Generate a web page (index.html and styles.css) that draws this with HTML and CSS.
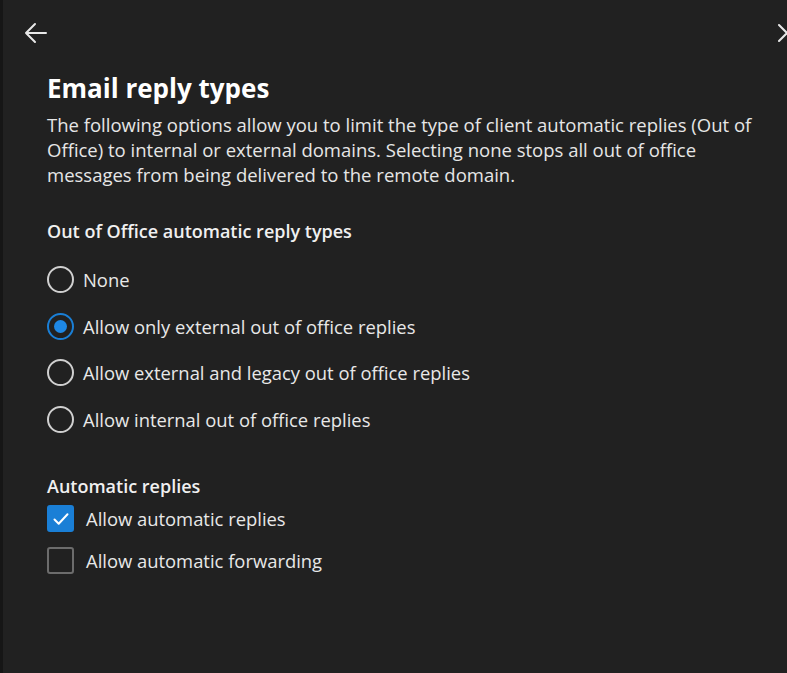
FILE: index.html
```html
<!DOCTYPE html>
<html lang="en">
<head>
<meta charset="utf-8">
<title>Email reply types</title>
<link rel="stylesheet" href="styles.css">
</head>
<body>
<div class="edge"></div>
<div class="panel">
  <div class="topbar">
    <button class="icon-btn back" aria-label="Back">
      <svg width="24" height="24" viewBox="0 0 24 24"><path d="M22 12H2M11 3L2 12l9 9" fill="none" stroke="#e8e8e8" stroke-width="2" stroke-linecap="round" stroke-linejoin="round"/></svg>
    </button>
    <button class="icon-btn close" aria-label="Close">
      <svg width="20" height="20" viewBox="0 0 20 20"><path d="M2 2l16 16M18 2L2 18" fill="none" stroke="#e8e8e8" stroke-width="2" stroke-linecap="round"/></svg>
    </button>
  </div>
  <div class="content">
    <h1 class="title">Email reply types</h1>
    <p class="desc">The following options allow you to limit the type of client automatic replies (Out of Office) to internal or external domains. Selecting none stops all out of office messages from being delivered to the remote domain.</p>

    <h2 class="section">Out of Office automatic reply types</h2>
    <div class="radios">
      <label class="radio"><span class="circle"></span><span class="label">None</span></label>
      <label class="radio checked"><span class="circle"></span><span class="label">Allow only external out of office replies</span></label>
      <label class="radio"><span class="circle"></span><span class="label">Allow external and legacy out of office replies</span></label>
      <label class="radio"><span class="circle"></span><span class="label">Allow internal out of office replies</span></label>
    </div>

    <h2 class="section section2">Automatic replies</h2>
    <div class="checks">
      <label class="check checked"><span class="box"><svg width="20" height="20" viewBox="0 0 20 20"><path d="M3.5 10.5l4.2 4.2 8.8-9.4" fill="none" stroke="#fff" stroke-width="2" stroke-linecap="round" stroke-linejoin="round"/></svg></span><span class="label">Allow automatic replies</span></label>
      <label class="check"><span class="box"></span><span class="label">Allow automatic forwarding</span></label>
    </div>
  </div>
</div>
</body>
</html>
```
FILE: styles.css
```css
html, body {
  margin: 0;
  padding: 0;
  height: 100%;
  background: #212121;
  overflow: hidden;
}
body {
  display: flex;
  font-family: "Open Sans", "Noto Sans", sans-serif;
  color: #f0f0f0;
}
.edge {
  width: 3px;
  background: #161616;
  flex: none;
}
.panel {
  flex: 1;
  position: relative;
}
.topbar {
  display: flex;
  justify-content: space-between;
  align-items: center;
  height: 66px;
  padding: 0 0 0 21px;
}
.icon-btn {
  background: none;
  border: 0;
  padding: 0;
  display: flex;
  cursor: pointer;
}
.close {
  margin-right: -10px;
}
.content {
  padding: 0 24px 0 44px;
}
.title {
  margin: 6px 0 0;
  font-size: 26px;
  font-weight: 700;
  line-height: 32px;
  color: #fff;
}
.desc {
  margin: 8px 0 0;
  font-size: 18.5px;
  line-height: 25px;
  color: #e6e6e6;
}
.section {
  margin: 32px 0 0;
  font-size: 18px;
  font-weight: 600;
  line-height: 24px;
  color: #f0f0f0;
}
.radios {
  display: flex;
  flex-direction: column;
  gap: 19.7px;
  margin-top: 23px;
}
.radio, .check {
  display: flex;
  align-items: center;
  font-size: 18.4px;
  color: #e8e8e8;
}
.circle {
  width: 23px;
  height: 23px;
  border: 2px solid #d0d0d0;
  border-radius: 50%;
  margin-right: 9px;
  flex: none;
  display: flex;
  align-items: center;
  justify-content: center;
}
.radio.checked .circle {
  border-color: #1a7fd6;
}
.radio.checked .circle::after {
  content: "";
  width: 13px;
  height: 13px;
  border-radius: 50%;
  background: #1e88e5;
}
.section2 {
  margin-top: 41px;
}
.checks {
  display: flex;
  flex-direction: column;
  gap: 15px;
  margin-top: 7px;
}
.box {
  width: 23px;
  height: 23px;
  border: 2px solid #6c6c6c;
  border-radius: 3px;
  margin-right: 12px;
  flex: none;
  display: flex;
  align-items: center;
  justify-content: center;
}
.check.checked .box {
  background: #1a7fd6;
  border-color: #1a7fd6;
}
```
